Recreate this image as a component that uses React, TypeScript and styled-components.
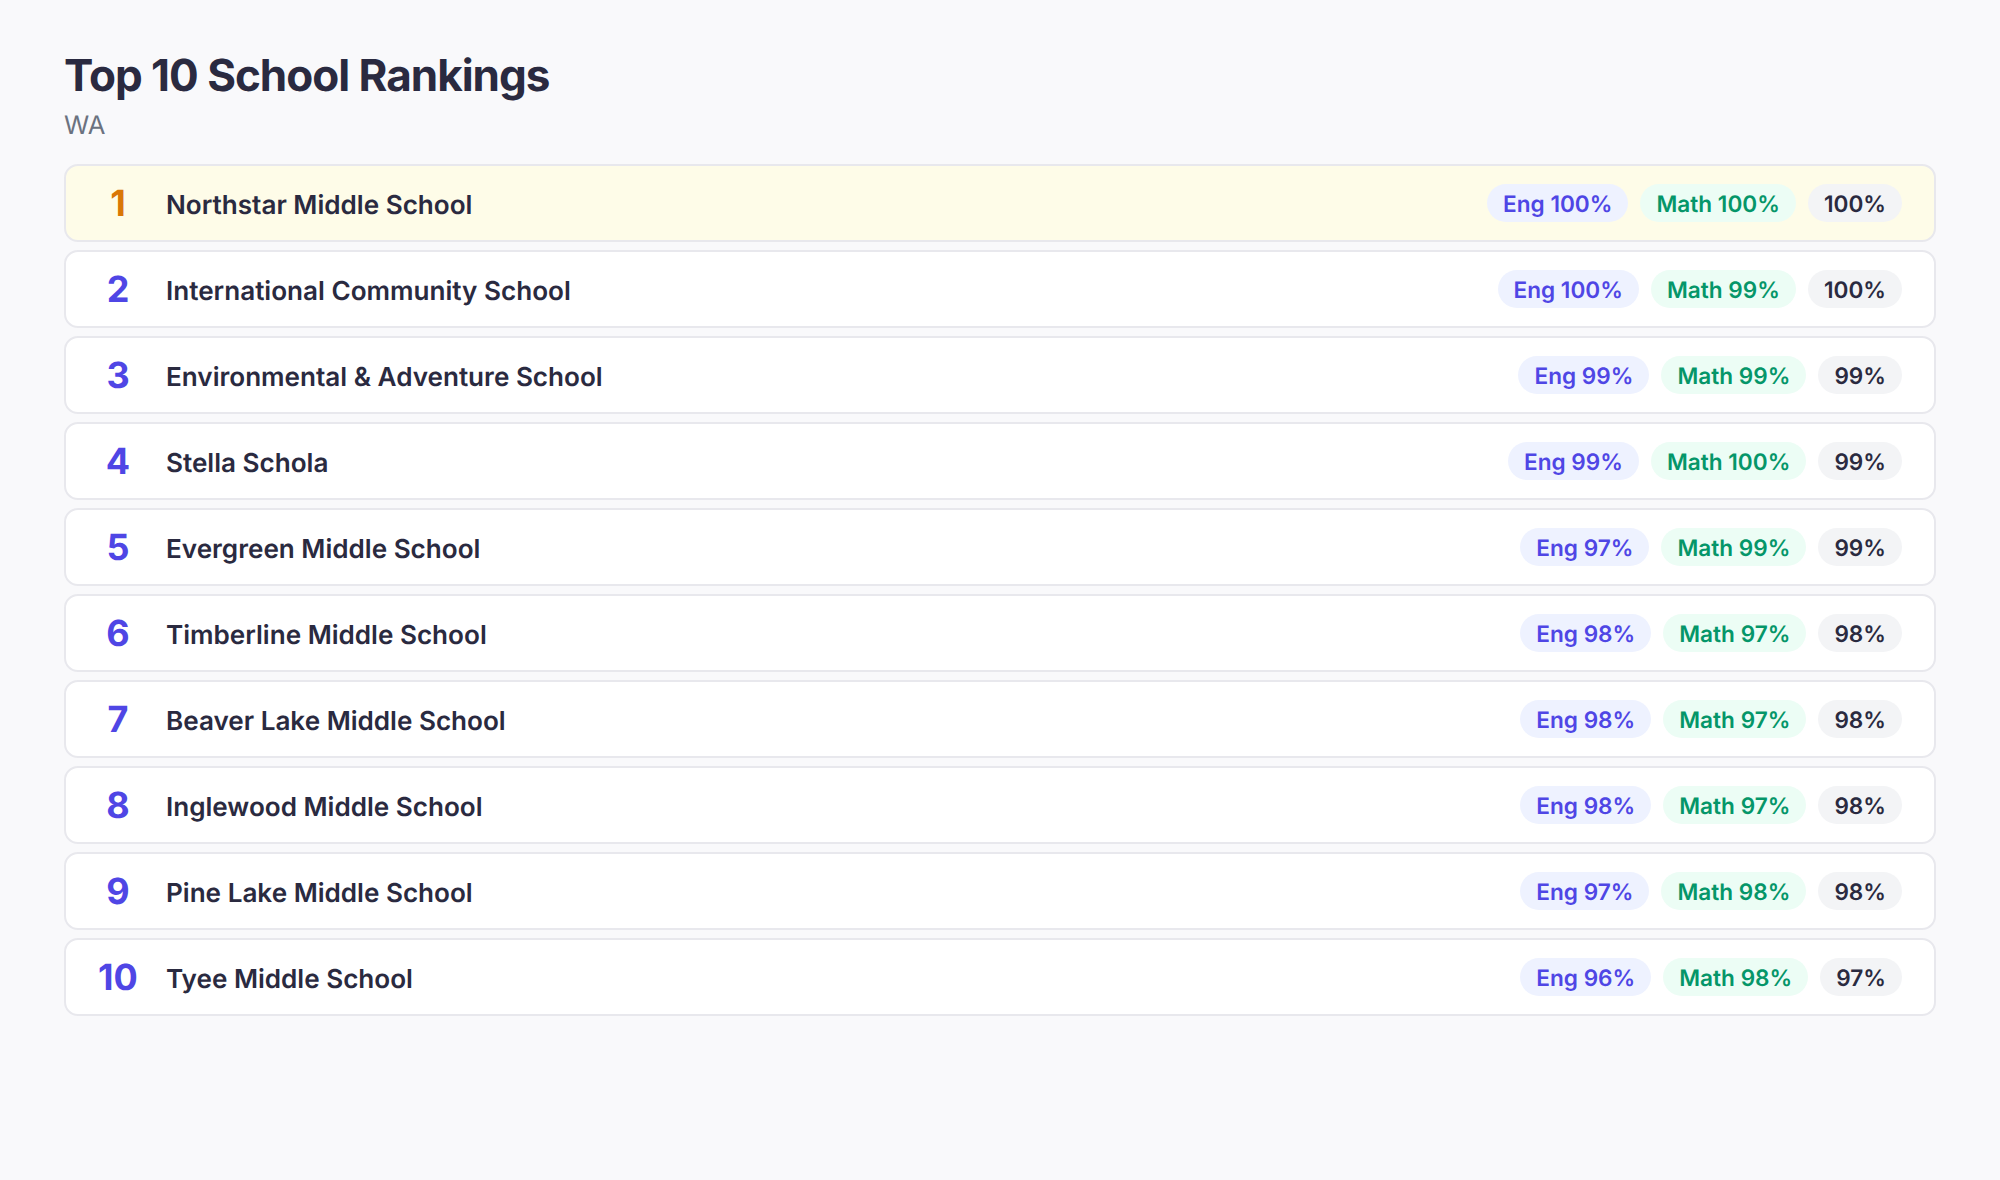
import React from 'react';
import styled, { createGlobalStyle } from 'styled-components';

const GlobalStyle = createGlobalStyle`
  html, body {
    margin: 0;
    padding: 0;
    background: #f9f9fb;
    font-family: Inter, "Liberation Sans", sans-serif;
    text-rendering: geometricPrecision;
  }
`;

const Page = styled.div`
  min-height: 1180px;
  box-sizing: border-box;
  padding: 48px 64px;
  background: #f9f9fb;
`;

const Title = styled.h1`
  margin: 0;
  font-size: 44px;
  line-height: 54px;
  font-weight: 700;
  letter-spacing: -1px;
  color: #2a2a40;
`;

const Subtitle = styled.div`
  margin-top: 7px;
  margin-bottom: 21px;
  font-size: 25.6px;
  line-height: 34px;
  color: #6b7280;
`;

const List = styled.div`
  display: flex;
  flex-direction: column;
  gap: 8px;
`;

const Row = styled.div<{ $top?: boolean }>`
  display: flex;
  align-items: center;
  gap: 28px;
  height: 78px;
  box-sizing: border-box;
  padding: 0 32px;
  border: 2px solid #e8e8ed;
  border-radius: 14px;
  background: ${({ $top }) => ($top ? '#fefce8' : '#ffffff')};
`;

const Rank = styled.div<{ $top?: boolean }>`
  width: 40px;
  flex-shrink: 0;
  text-align: center;
  font-size: 36px;
  font-weight: 700;
  color: ${({ $top }) => ($top ? '#d97706' : '#4f46e5')};
`;

const Name = styled.div`
  flex: 1;
  padding-top: 4px;
  font-size: 26.1px;
  font-weight: 600;
  color: #2a2a40;
`;

const Scores = styled.div`
  display: flex;
  gap: 12px;
`;

const pillColors = {
  eng: { bg: '#eef2ff', fg: '#4f46e5' },
  math: { bg: '#ecfdf5', fg: '#059669' },
  total: { bg: '#f3f4f6', fg: '#2a2a40' },
};

const Pill = styled.span<{ $kind: keyof typeof pillColors }>`
  box-sizing: border-box;
  height: 38px;
  line-height: 34px;
  padding: 4px 16px 0;
  border-radius: 19px;
  font-size: 22.6px;
  font-weight: 600;
  white-space: nowrap;
  background: ${({ $kind }) => pillColors[$kind].bg};
  color: ${({ $kind }) => pillColors[$kind].fg};
`;

const schools = [
  { name: 'Northstar Middle School', eng: 100, math: 100, total: 100 },
  { name: 'International Community School', eng: 100, math: 99, total: 100 },
  { name: 'Environmental & Adventure School', eng: 99, math: 99, total: 99 },
  { name: 'Stella Schola', eng: 99, math: 100, total: 99 },
  { name: 'Evergreen Middle School', eng: 97, math: 99, total: 99 },
  { name: 'Timberline Middle School', eng: 98, math: 97, total: 98 },
  { name: 'Beaver Lake Middle School', eng: 98, math: 97, total: 98 },
  { name: 'Inglewood Middle School', eng: 98, math: 97, total: 98 },
  { name: 'Pine Lake Middle School', eng: 97, math: 98, total: 98 },
  { name: 'Tyee Middle School', eng: 96, math: 98, total: 97 },
];

const App: React.FC = () => (
  <Page>
    <GlobalStyle />
    <Title>Top 10 School Rankings</Title>
    <Subtitle>WA</Subtitle>
    <List>
      {schools.map((school, i) => (
        <Row key={school.name} $top={i === 0}>
          <Rank $top={i === 0}>{i + 1}</Rank>
          <Name>{school.name}</Name>
          <Scores>
            <Pill $kind="eng">Eng {school.eng}%</Pill>
            <Pill $kind="math">Math {school.math}%</Pill>
            <Pill $kind="total">{school.total}%</Pill>
          </Scores>
        </Row>
      ))}
    </List>
  </Page>
);

export default App;
